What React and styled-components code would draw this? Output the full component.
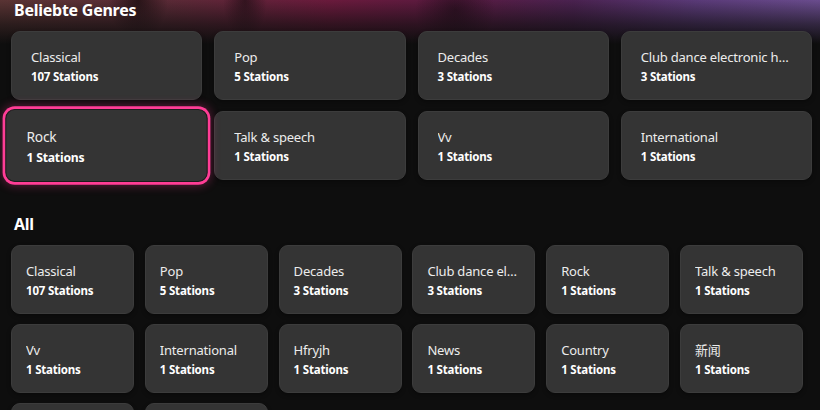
import React from 'react';
import styled, { createGlobalStyle } from 'styled-components';

const popular = [
  { name: 'Classical', count: 107 },
  { name: 'Pop', count: 5 },
  { name: 'Decades', count: 3 },
  { name: 'Club dance electronic house techno', count: 3 },
  { name: 'Rock', count: 1, active: true },
  { name: 'Talk & speech', count: 1 },
  { name: 'Vv', count: 1 },
  { name: 'International', count: 1 },
];

const all = [
  { name: 'Classical', count: 107 },
  { name: 'Pop', count: 5 },
  { name: 'Decades', count: 3 },
  { name: 'Club dance electronic house techno', count: 3 },
  { name: 'Rock', count: 1 },
  { name: 'Talk & speech', count: 1 },
  { name: 'Vv', count: 1 },
  { name: 'International', count: 1 },
  { name: 'Hfryjh', count: 1 },
  { name: 'News', count: 1 },
  { name: 'Country', count: 1 },
  { name: '新闻', count: 1 },
  { name: 'Jazz', count: 1 },
  { name: 'Metal', count: 1 },
];

const GlobalStyle = createGlobalStyle`
  html, body {
    margin: 0;
    padding: 0;
    background: #0e0e0e;
  }
  body {
    font-family: 'Noto Sans', 'Noto Sans CJK SC', sans-serif;
    color: #fff;
    overflow: hidden;
  }
`;

const Page = styled.div`
  height: 410px;
  overflow: hidden;
  padding: 0 8px 0 11px;
  background:
    linear-gradient(to bottom, rgba(14, 14, 14, 0) 0px, rgba(14, 14, 14, 0.6) 24px, #0e0e0e 44px) no-repeat,
    radial-gradient(ellipse 30px 40px at 138px 0px, rgba(20, 10, 12, 0.7), transparent) no-repeat,
    radial-gradient(ellipse 22px 40px at 245px 0px, rgba(20, 10, 14, 0.6), transparent) no-repeat,
    radial-gradient(ellipse 40px 40px at 455px 10px, rgba(25, 10, 20, 0.6), transparent) no-repeat,
    linear-gradient(to right, #5a3434 0%, #5a2a36 20%, #6a1a3c 40%, #5a1a40 55%, #4a2250 70%, #5a3a78 85%, #6a4c8e 100%) no-repeat,
    #0e0e0e;
  background-size: 100% 46px, 100% 46px, 100% 46px, 100% 46px, 100% 46px;
`;

const SectionTitle = styled.h2`
  margin: ${props => (props.first ? '0' : '34px')} 0 0 3px;
  font-size: 16px;
  line-height: 20px;
  font-weight: 700;
  letter-spacing: -0.25px;
  color: #fff;
`;

const Grid = styled.div`
  display: grid;
  grid-template-columns: ${props => props.columns};
  grid-auto-rows: 69px;
  column-gap: ${props => props.colGap}px;
  row-gap: ${props => props.rowGap}px;
  margin-top: 11px;
`;

const Card = styled.div`
  box-sizing: border-box;
  display: flex;
  flex-direction: column;
  justify-content: center;
  gap: 3px;
  min-width: 0;
  padding: 1px ${props => props.pad}px 0;
  border-radius: 9px;
  background: #343434;
  border: 1px solid #3c3c3c;
  box-shadow: 0 2px 4px rgba(0, 0, 0, 0.35);
  ${props =>
    props.active &&
    `
    transform: scale(1.06);
    border-color: #1c1c1c;
    box-shadow: 0 0 0 2.5px #ff3d96, 0 0 9px 3px rgba(255, 61, 150, 0.3);
  `}
`;

const Name = styled.div`
  font-size: 13px;
  line-height: 18px;
  letter-spacing: -0.2px;
  color: #ececec;
  white-space: nowrap;
  overflow: hidden;
  text-overflow: ellipsis;
`;

const Count = styled.div`
  font-size: 11.5px;
  line-height: 16px;
  font-weight: 700;
  letter-spacing: -0.2px;
  color: #fff;
`;

function GenreCard({ genre, pad }) {
  return (
    <Card pad={pad} active={genre.active}>
      <Name>{genre.name}</Name>
      <Count>{genre.count} Stations</Count>
    </Card>
  );
}

export default function App() {
  return (
    <>
      <GlobalStyle />
      <Page>
        <SectionTitle first>Beliebte Genres</SectionTitle>
        <Grid columns="repeat(4, 1fr)" colGap={12} rowGap={11}>
          {popular.map(genre => (
            <GenreCard key={genre.name} genre={genre} pad={19} />
          ))}
        </Grid>
        <SectionTitle>All</SectionTitle>
        <Grid columns="repeat(6, 123px)" colGap={10.8} rowGap={10}>
          {all.map(genre => (
            <GenreCard key={genre.name} genre={genre} pad={14} />
          ))}
        </Grid>
      </Page>
    </>
  );
}
